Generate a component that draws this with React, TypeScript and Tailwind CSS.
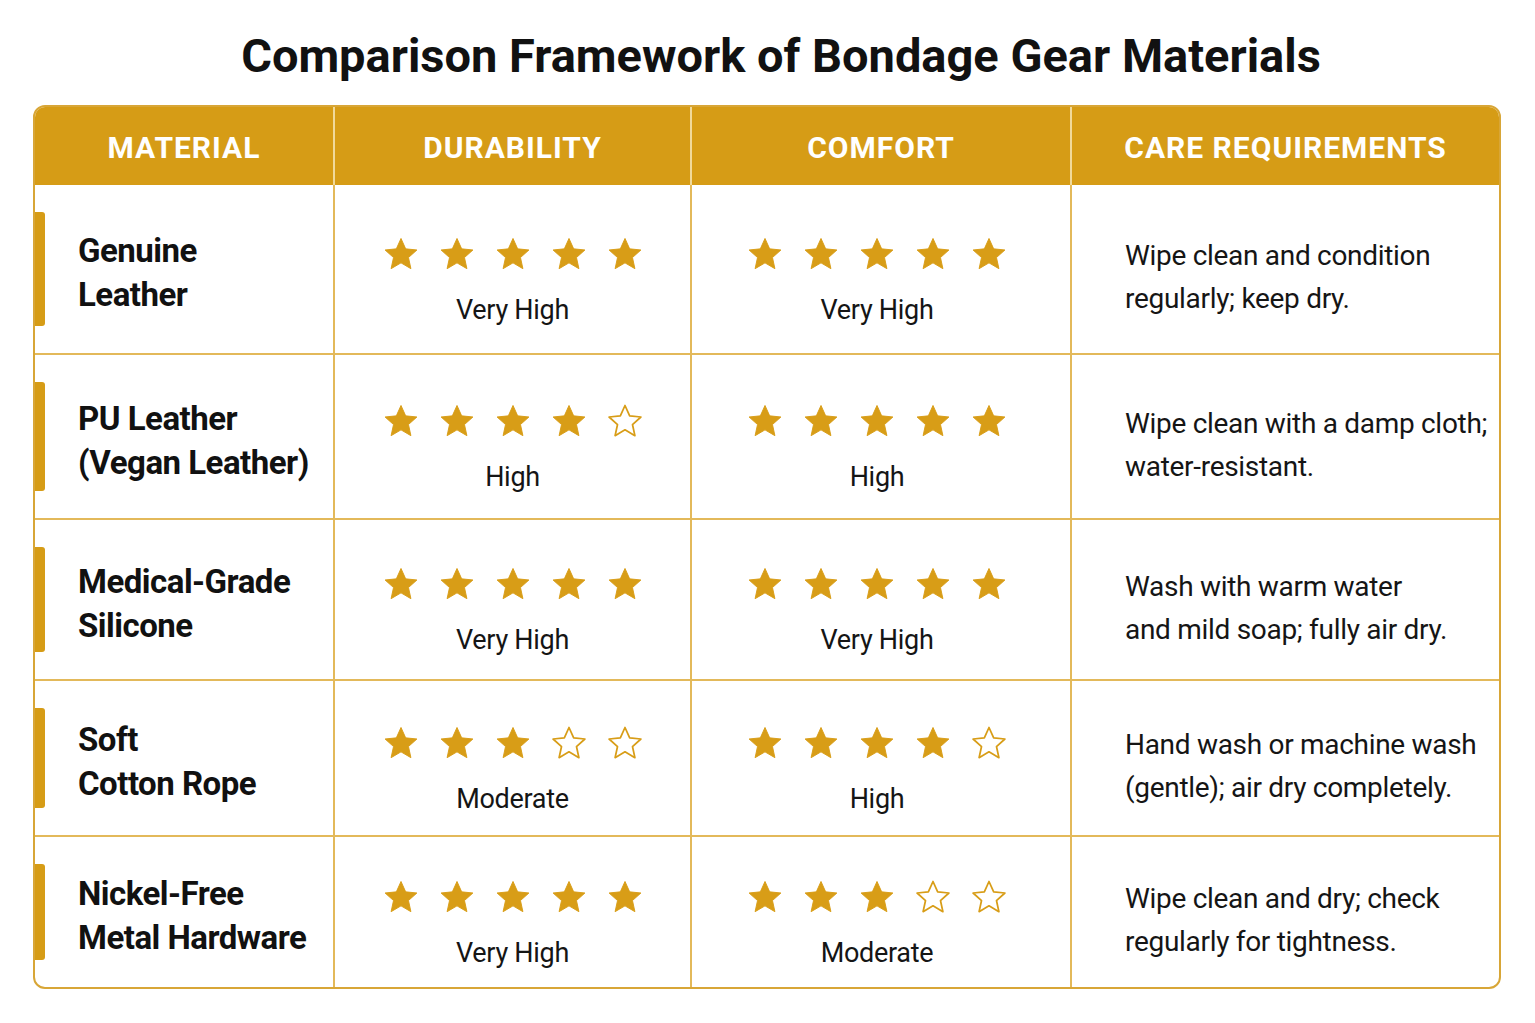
import React from "react";

type Row = {
  name: string[];
  durability: number;
  durabilityLabel: string;
  comfort: number;
  comfortLabel: string;
  care: string[];
  height: string;
};

const rows: Row[] = [
  {
    name: ["Genuine", "Leather"],
    durability: 5,
    durabilityLabel: "Very High",
    comfort: 5,
    comfortLabel: "Very High",
    care: ["Wipe clean and condition", "regularly; keep dry."],
    height: "h-[168px]",
  },
  {
    name: ["PU Leather", "(Vegan Leather)"],
    durability: 4,
    durabilityLabel: "High",
    comfort: 5,
    comfortLabel: "High",
    care: ["Wipe clean with a damp cloth;", "water-resistant."],
    height: "h-[165px]",
  },
  {
    name: ["Medical-Grade", "Silicone"],
    durability: 5,
    durabilityLabel: "Very High",
    comfort: 5,
    comfortLabel: "Very High",
    care: ["Wash with warm water", "and mild soap; fully air dry."],
    height: "h-[161px]",
  },
  {
    name: ["Soft", "Cotton Rope"],
    durability: 3,
    durabilityLabel: "Moderate",
    comfort: 4,
    comfortLabel: "High",
    care: ["Hand wash or machine wash", "(gentle); air dry completely."],
    height: "h-[156px]",
  },
  {
    name: ["Nickel-Free", "Metal Hardware"],
    durability: 5,
    durabilityLabel: "Very High",
    comfort: 3,
    comfortLabel: "Moderate",
    care: ["Wipe clean and dry; check", "regularly for tightness."],
    height: "h-[152px]",
  },
];

const Star = ({ filled }: { filled: boolean }) => (
  <svg viewBox="0 0 24 24" className="size-[38px]">
    <path
      d="M12 2.2l2.95 6.55 7.1.72-5.33 4.77 1.53 7.02L12 17.6l-6.25 3.66 1.53-7.02L1.95 9.47l7.1-.72z"
      fill={filled ? "#d89d17" : "#ffffff"}
      stroke="#d89d17"
      strokeWidth={filled ? 0.6 : 1.1}
      strokeLinejoin="round"
    />
  </svg>
);

const Rating = ({ value, label }: { value: number; label: string }) => (
  <div className="flex flex-col items-center pt-[20px]">
    <div className="flex gap-[18px]">
      {[0, 1, 2, 3, 4].map((i) => (
        <Star key={i} filled={i < value} />
      ))}
    </div>
    <p className="mt-[24px] text-[27px] leading-none text-[#151515] tracking-[-0.3px]">{label}</p>
  </div>
);

export default function App() {
  return (
    <div className="min-h-screen w-full bg-white font-['Roboto',sans-serif] pt-[32px]">
      <h1 className="text-center text-[47px] font-bold leading-none text-[#111] ml-[27px] tracking-[0px]">
        Comparison Framework of Bondage Gear Materials
      </h1>
      <div className="mt-[26px] ml-[33px] w-[1468px] rounded-[12px] border-2 border-[#d8a637] overflow-hidden">
        <div className="grid grid-cols-[300px_357px_380px_427px] h-[78px] bg-[#d69c16] text-white font-bold text-[30px] tracking-[1px]">
          <div className="flex items-center justify-center border-r-2 border-[#f1d99a] pt-[2px]">MATERIAL</div>
          <div className="flex items-center justify-center border-r-2 border-[#f1d99a] pt-[2px]">DURABILITY</div>
          <div className="flex items-center justify-center border-r-2 border-[#f1d99a] pt-[2px]">COMFORT</div>
          <div className="flex items-center justify-center pt-[2px]">CARE REQUIREMENTS</div>
        </div>
        {rows.map((row, idx) => (
          <div
            key={idx}
            className={`grid grid-cols-[300px_357px_380px_427px] ${row.height} ${idx > 0 ? "border-t-2 border-[#e3b95a]" : ""}`}
          >
            <div className="flex border-r-2 border-[#e3b95a]">
              <div className="my-[27px] w-[10px] rounded-r-[3px] bg-[#d69c16]" />
              <div className="flex flex-col justify-center pl-[33px] pt-[8px] text-[33px] font-bold leading-[44px] text-[#111] tracking-[-0.5px]">
                {row.name.map((n) => (
                  <span key={n}>{n}</span>
                ))}
              </div>
            </div>
            <div className="flex items-center justify-center border-r-2 border-[#e3b95a]">
              <Rating value={row.durability} label={row.durabilityLabel} />
            </div>
            <div className="flex items-center justify-center border-r-2 border-[#e3b95a] pr-[8px]">
              <Rating value={row.comfort} label={row.comfortLabel} />
            </div>
            <div className="flex flex-col justify-center pl-[53px] pt-[16px] text-[28px] leading-[43px] text-[#151515] tracking-[-0.3px]">
              {row.care.map((c) => (
                <span key={c}>{c}</span>
              ))}
            </div>
          </div>
        ))}
      </div>
    </div>
  );
}
